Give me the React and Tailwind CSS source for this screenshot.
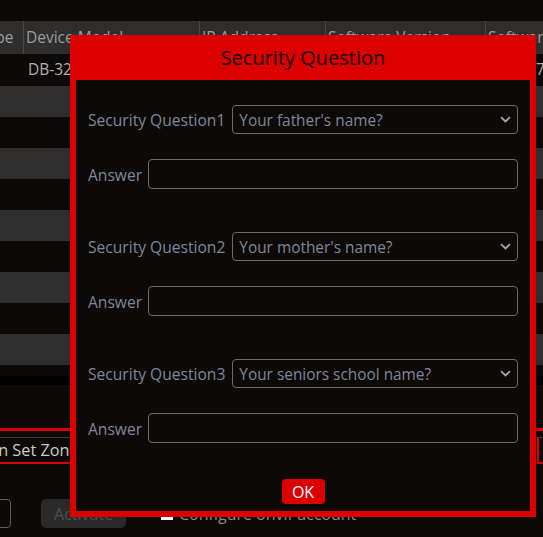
import React from "react";

const font = { fontFamily: '"Open Sans", "Noto Sans", sans-serif' };

function Chevron() {
  return (
    <svg width="11" height="7" viewBox="0 0 11 7" className="shrink-0">
      <path d="M1 1.2 L5.5 5.5 L10 1.2" fill="none" stroke="#a3a3a3" strokeWidth="1.8" />
    </svg>
  );
}

function SelectRow({ label, value }) {
  return (
    <div className="flex items-center gap-[7px] h-[29px]">
      <span className="mt-[3px] text-[15.6px] text-[#7d889b] whitespace-nowrap leading-none">{label}</span>
      <div className="flex-1 h-full flex items-center justify-between rounded-[4px] border border-[#6b6b6b] pl-[6px] pr-[6px]">
        <span className="mt-[3px] text-[15.4px] text-[#7d889b] leading-none">{value}</span>
        <Chevron />
      </div>
    </div>
  );
}

function AnswerRow({ className = "" }) {
  return (
    <div className={"flex items-center gap-[6px] h-[30px] " + className}>
      <span className="mt-[3px] text-[15.6px] text-[#7d889b] whitespace-nowrap leading-none">Answer</span>
      <div className="flex-1 h-full rounded-[4px] border border-[#6b6b6b]" />
    </div>
  );
}

export default function App() {
  const cols = [
    { w: "w-[47px]", h: "Type" },
    { w: "w-[176px]", h: "Device Model" },
    { w: "w-[126px]", h: "IP Address" },
    { w: "w-[160px]", h: "Software Version" },
    { w: "w-[120px]", h: "Software Build Date" },
  ];
  return (
    <div className="relative w-[543px] h-[537px] overflow-hidden bg-[#0d0907]" style={font}>
      {/* background page */}
      <div className="h-[21px]" />
      <div className="ml-[-23px] flex h-[33px] bg-[#2e2e2e] w-[640px]">
        {cols.map((c, i) => (
          <div
            key={i}
            className={c.w + " h-full flex items-center pl-[2px] border-r border-[#474747] text-[15.5px] text-[#9d9d9d] whitespace-nowrap overflow-hidden"}
          >
            {c.h}
          </div>
        ))}
      </div>
      <div className="h-[32px] flex items-center">
        <span className="ml-[28px] text-[15.5px] text-[#b0b0b0]">DB-3212</span>
        <span className="ml-auto mr-[-10px] w-[17px] text-[15.5px] text-[#b0b0b0]">7.1</span>
      </div>
      <div className="h-[31px] bg-[#2e2e2e]" />
      <div className="h-[31px]" />
      <div className="h-[31px] bg-[#2e2e2e]" />
      <div className="h-[31px]" />
      <div className="h-[31px] bg-[#2e2e2e]" />
      <div className="h-[31px]" />
      <div className="h-[31px] bg-[#2e2e2e]" />
      <div className="h-[31px]" />
      <div className="h-[31px] bg-[#2e2e2e]" />
      <div className="h-[11px]" />
      <div className="h-[9px] bg-black" />
      <div className="h-[43px]" />
      <div className="h-[3px] bg-[#dc0000]" />
      <div className="mt-[6px] flex justify-between h-[27px]">
        <div className="ml-[-52px] w-[160px] h-full border-t border-[#3a3a3a] border-b-2 border-b-[#dc0000] flex items-center pl-[6px] text-[16.3px] text-[#c9c9c9] whitespace-nowrap">
          Motion Set Zone
        </div>
        <div className="w-[6px] h-full border-t border-[#3a3a3a] border-l-2 border-l-[#dc0000] border-b-2 border-b-[#dc0000]" />
      </div>
      <div className="mt-[35px] flex items-center h-[29px]">
        <div className="ml-[-40px] w-[51px] h-full rounded-[4px] border border-[#5e5e5e]" />
        <div className="ml-[30px] w-[85px] h-full rounded-[5px] bg-[#2a2a2a] flex items-center justify-center text-[16px] text-[#4e4e4e]">
          Activate
        </div>
        <div className="ml-[35px] w-[12px] h-[12px] bg-white" />
        <span className="ml-[6px] text-[16px] text-[#8a8a8a] whitespace-nowrap">Configure onvif account</span>
      </div>

      {/* modal */}
      <div className="absolute left-[70px] top-[35px] w-[466px] h-[482px] bg-[#dc0000] flex flex-col px-[6px] pb-[6px]">
        <div className="h-[45px] shrink-0 flex items-center justify-center text-[20px] text-[#140303]">
          Security Question
        </div>
        <div className="flex-1 bg-[#0d0907] flex flex-col px-[12px] pt-[25px]">
          <SelectRow label="Security Question1" value="Your father's name?" />
          <AnswerRow className="mt-[25px]" />
          <div className="mt-[43px]">
            <SelectRow label="Security Question2" value="Your mother's name?" />
          </div>
          <AnswerRow className="mt-[25px]" />
          <div className="mt-[43px]">
            <SelectRow label="Security Question3" value="Your seniors school name?" />
          </div>
          <AnswerRow className="mt-[25px]" />
          <div className="mt-[36px] flex justify-center">
            <div className="w-[43px] h-[25px] rounded-[4px] bg-[#dc0000] flex items-center justify-center text-[16px] text-white leading-none">
              OK
            </div>
          </div>
        </div>
      </div>
    </div>
  );
}
